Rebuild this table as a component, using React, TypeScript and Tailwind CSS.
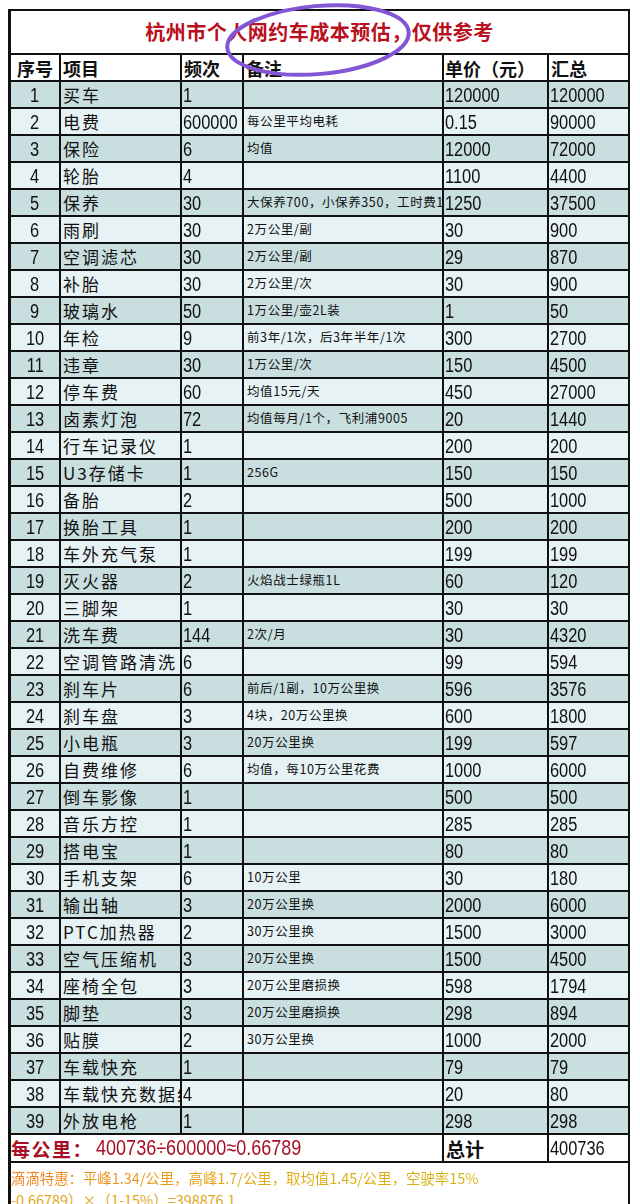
import React from "react";

type Row = [string, string, string, string, string, string];

const rows: Row[] = [
  ["1", "买车", "1", "", "120000", "120000"],
  ["2", "电费", "600000", "每公里平均电耗", "0.15", "90000"],
  ["3", "保险", "6", "均值", "12000", "72000"],
  ["4", "轮胎", "4", "", "1100", "4400"],
  ["5", "保养", "30", "大保养700，小保养350，工时费150", "1250", "37500"],
  ["6", "雨刷", "30", "2万公里/副", "30", "900"],
  ["7", "空调滤芯", "30", "2万公里/副", "29", "870"],
  ["8", "补胎", "30", "2万公里/次", "30", "900"],
  ["9", "玻璃水", "50", "1万公里/壶2L装", "1", "50"],
  ["10", "年检", "9", "前3年/1次，后3年半年/1次", "300", "2700"],
  ["11", "违章", "30", "1万公里/次", "150", "4500"],
  ["12", "停车费", "60", "均值15元/天", "450", "27000"],
  ["13", "卤素灯泡", "72", "均值每月/1个，飞利浦9005", "20", "1440"],
  ["14", "行车记录仪", "1", "", "200", "200"],
  ["15", "U3存储卡", "1", "256G", "150", "150"],
  ["16", "备胎", "2", "", "500", "1000"],
  ["17", "换胎工具", "1", "", "200", "200"],
  ["18", "车外充气泵", "1", "", "199", "199"],
  ["19", "灭火器", "2", "火焰战士绿瓶1L", "60", "120"],
  ["20", "三脚架", "1", "", "30", "30"],
  ["21", "洗车费", "144", "2次/月", "30", "4320"],
  ["22", "空调管路清洗", "6", "", "99", "594"],
  ["23", "刹车片", "6", "前后/1副，10万公里换", "596", "3576"],
  ["24", "刹车盘", "3", "4块，20万公里换", "600", "1800"],
  ["25", "小电瓶", "3", "20万公里换", "199", "597"],
  ["26", "自费维修", "6", "均值，每10万公里花费", "1000", "6000"],
  ["27", "倒车影像", "1", "", "500", "500"],
  ["28", "音乐方控", "1", "", "285", "285"],
  ["29", "搭电宝", "1", "", "80", "80"],
  ["30", "手机支架", "6", "10万公里", "30", "180"],
  ["31", "输出轴", "3", "20万公里换", "2000", "6000"],
  ["32", "PTC加热器", "2", "30万公里换", "1500", "3000"],
  ["33", "空气压缩机", "3", "20万公里换", "1500", "4500"],
  ["34", "座椅全包", "3", "20万公里磨损换", "598", "1794"],
  ["35", "脚垫", "3", "20万公里磨损换", "298", "894"],
  ["36", "贴膜", "2", "30万公里换", "1000", "2000"],
  ["37", "车载快充", "1", "", "79", "79"],
  ["38", "车载快充数据线", "4", "", "20", "80"],
  ["39", "外放电枪", "1", "", "298", "298"],
];

const cjk = "font-['Noto_Sans_CJK_SC',sans-serif]";

// narrow digits, like the spreadsheet's condensed number font
function Num({ v, center, big }: { v: string; center?: boolean; big?: boolean }) {
  return (
    <span
      className={`inline-block whitespace-nowrap font-['Liberation_Sans',sans-serif] leading-none scale-x-[0.82] ${
        center ? "origin-center" : "origin-left"
      } ${big ? "text-[22px]" : "text-[20px]"}`}
    >
      {v}
    </span>
  );
}

export default function App() {
  return (
    <div className="relative h-[1204px] w-[640px] overflow-hidden bg-white pt-[9px] pl-[8px] pr-[10px]">
      <div className="flex h-[1195px] flex-col border-t-2 border-r-2 border-l-[3px] border-[#111]">
        {/* Title */}
        <div className="flex h-[44px] shrink-0 items-center justify-center border-b-2 border-[#111] bg-white">
          <span className={`${cjk} text-[20px] font-bold tracking-[0.5px] text-[#b8101e]`}>
            杭州市个人网约车成本预估，仅供参考
          </span>
        </div>

        {/* Header */}
        <div className={`${cjk} flex h-[27px] shrink-0 border-b-2 border-[#111] bg-white text-[18px] font-bold leading-none text-[#111]`}>
          <div className="flex w-[50px] items-center justify-center border-r-2 border-[#111]">序号</div>
          <div className="flex w-[121px] items-center border-r-2 border-[#111] pl-[2px]">项目</div>
          <div className="flex w-[62px] items-center border-r-2 border-[#111] pl-[2px]">频次</div>
          <div className="flex w-[200px] items-center border-r-2 border-[#111] pl-[2px]">备注</div>
          <div className="flex w-[105px] items-center border-r-2 border-[#111] pl-[1px]">单价（元）</div>
          <div className="flex w-[79px] items-center pl-[2px]">汇总</div>
        </div>

        {/* Body */}
        {rows.map((r, i) => (
          <div
            key={r[0]}
            className={`flex h-[27px] shrink-0 border-b-2 border-[#111] text-[#111] ${
              i % 2 === 0 ? "bg-[#c8dedf]" : "bg-[#e7f2f4]"
            }`}
          >
            <div className="flex w-[50px] items-center justify-center border-r-2 border-[#111]">
              <Num v={r[0]} center />
            </div>
            <div className={`${cjk} flex w-[121px] items-center overflow-hidden whitespace-nowrap border-r-2 border-[#111] pl-[2px] text-[17px] leading-none tracking-[2px]`}>
              {r[1]}
            </div>
            <div className="flex w-[62px] items-center border-r-2 border-[#111] pl-[1px]">
              <Num v={r[2]} />
            </div>
            <div className={`${cjk} flex w-[200px] items-center overflow-hidden whitespace-nowrap border-r-2 border-[#111] pl-[3px] text-[12.5px] leading-none tracking-[0.6px]`}>
              {r[3]}
            </div>
            <div className="flex w-[105px] items-center border-r-2 border-[#111] pl-[1px]">
              <Num v={r[4]} />
            </div>
            <div className="flex w-[79px] items-center pl-[1px]">
              <Num v={r[5]} />
            </div>
          </div>
        ))}

        {/* Per km */}
        <div className="flex h-[28px] shrink-0 border-b-2 border-[#111] bg-white">
          <div className="flex w-[433px] items-center border-r-2 border-[#111] text-[#a80f26]">
            <span className={`${cjk} mr-[3px] text-[19px] font-bold leading-none tracking-[1.5px]`}>每公里：</span>
            <Num v="400736÷600000≈0.66789" big />
          </div>
          <div className={`${cjk} flex w-[105px] items-center border-r-2 border-[#111] pl-[2px] text-[19px] font-bold leading-none text-[#111]`}>
            总计
          </div>
          <div className="flex w-[79px] items-center pl-[1px] text-[#111]">
            <Num v="400736" />
          </div>
        </div>

        {/* Note */}
        <div className="flex flex-1 flex-col bg-white pt-[4px]">
          <span className={`${cjk} w-fit bg-gradient-to-r from-[#f0801e] via-[#e3a812] to-[#d6b20e] bg-clip-text text-[14.4px] leading-[22px] text-transparent`}>
            滴滴特惠：平峰1.34/公里，高峰1.7/公里，取均值1.45/公里，空驶率15%
          </span>
          <span className={`${cjk} w-fit text-[14.4px] leading-[22px] text-[#e0a818]`}>
            -0.66789）×（1-15%）=398876.1
          </span>
        </div>
      </div>

      {/* Hand-drawn circle annotation */}
      <svg className="absolute left-0 top-0" width="640" height="100" viewBox="0 0 640 100">
        <ellipse
          cx="318"
          cy="40"
          rx="91"
          ry="34"
          transform="rotate(-5 318 40)"
          fill="none"
          stroke="#8256d4"
          strokeWidth="4"
        />
      </svg>
    </div>
  );
}
